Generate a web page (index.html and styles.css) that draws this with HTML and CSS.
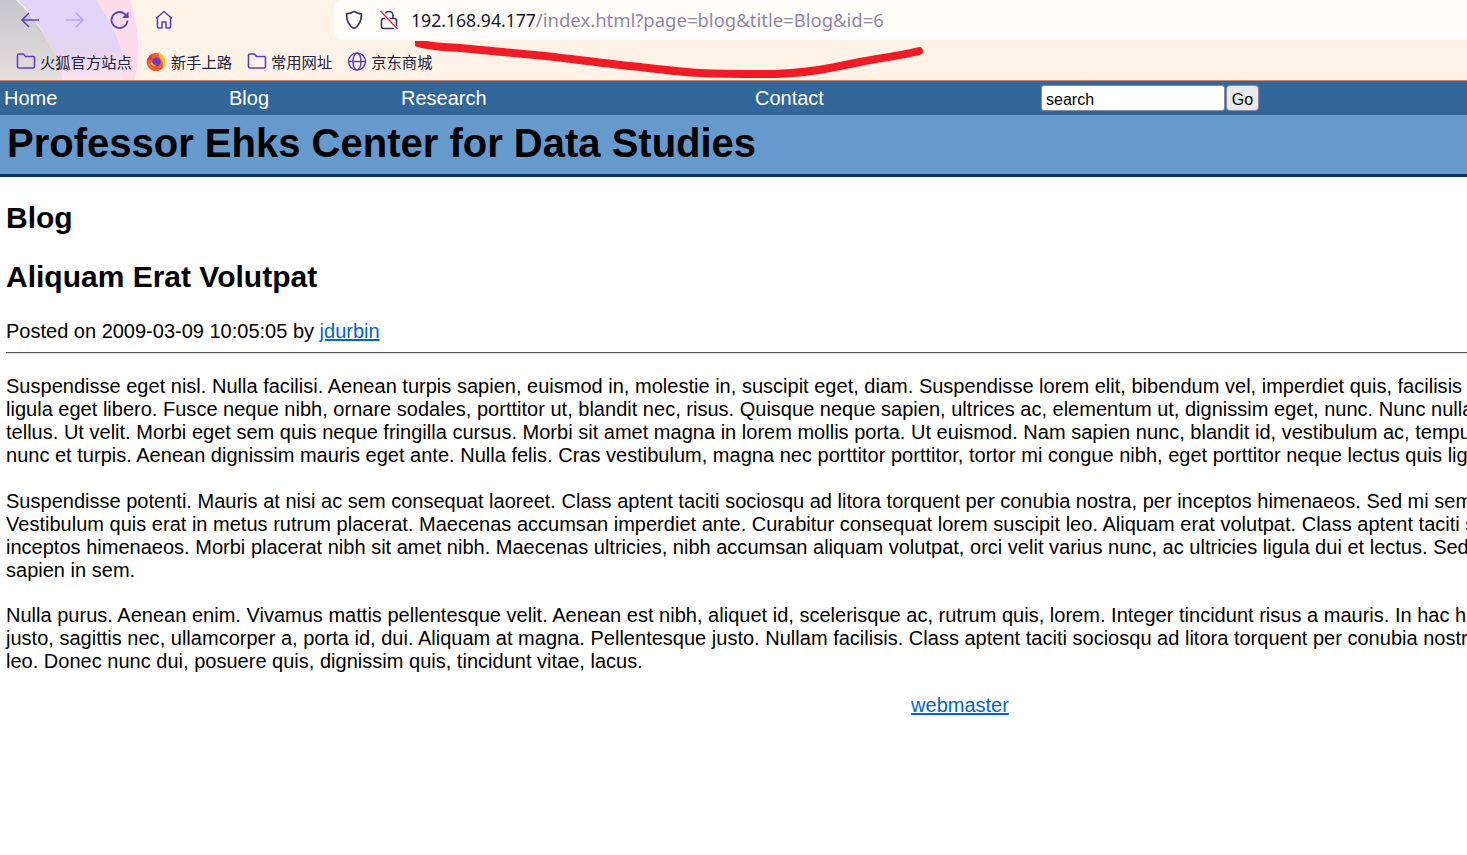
FILE: index.html
```html
<!DOCTYPE html>
<html lang="en">
<head>
<meta charset="utf-8">
<title>Professor Ehks Center for Data Studies</title>
<link rel="stylesheet" href="styles.css">
</head>
<body>
<div class="chrome">
  <svg class="theme" width="240" height="80" viewBox="0 0 240 80">
    <defs>
      <linearGradient id="grey" x1="0" y1="0" x2="0" y2="1"><stop offset="0" stop-color="#c6c5c9"/><stop offset="1" stop-color="#e4e0e0"/></linearGradient>
      <linearGradient id="lilac" x1="0" y1="0" x2="0" y2="1"><stop offset="0" stop-color="#e0d4fa"/><stop offset="0.6" stop-color="#e4d4f4"/><stop offset="1" stop-color="#fbe2ee"/></linearGradient>
    </defs>
    <path d="M96 0H130C138 28 142 55 134 80H60V0Z" fill="#fddcea"/>
    <path d="M18 0H96C112 25 128 50 122 80H62C62 62 40 22 18 0Z" fill="url(#lilac)"/>
    <path d="M0 0H16C40 22 62 62 62 80H0Z" fill="url(#grey)"/>
  </svg>
  <div class="toolbar">
    <svg class="tool" width="22" height="22" viewBox="0 0 22 22"><path d="M20 11H3M10 4l-7 7 7 7" fill="none" stroke="#5a40c8" stroke-width="1.6"/></svg>
    <svg class="tool" width="22" height="22" viewBox="0 0 22 22"><path d="M2 11h17M12 4l7 7-7 7" fill="none" stroke="#b3a6e8" stroke-width="1.6"/></svg>
    <svg class="tool" width="22" height="22" viewBox="0 0 22 22"><path d="M18.5 11.500a8 8 0 1 1-2.600-6.400L19 8" fill="none" stroke="#5a40c8" stroke-width="1.800"/><path d="M19.500 2.500v6.500h-6.500z" fill="#5a40c8"/></svg>
    <svg class="tool home" width="22" height="22" viewBox="0 0 22 22"><path d="M3 9.500 11 2.500l8 7M4.500 8.500V18a1 1 0 0 0 1 1h3.500v-6h4v6h3.500a1 1 0 0 0 1-1V8.500" fill="none" stroke="#5a40c8" stroke-width="1.600" stroke-linejoin="round"/></svg>
    <div class="urlbar">
      <svg width="20" height="22" viewBox="0 0 20 22"><path d="M10 2.500c2.500 1.500 5 2.200 7.500 2.300 0 6.500-1.500 11.700-7.500 14.700C4 16.500 2.500 11.300 2.500 4.800 5 4.700 7.500 4 10 2.500Z" fill="none" stroke="#3b3950" stroke-width="1.700" stroke-linejoin="round"/></svg>
      <svg width="20" height="22" viewBox="0 0 20 22"><rect x="2.500" y="9.500" width="15" height="10" rx="2" fill="none" stroke="#3b3950" stroke-width="1.600"/><path d="M6 9.500V6.500a4 4 0 0 1 8 0v3" fill="none" stroke="#3b3950" stroke-width="1.600"/><path d="M2 2l16 18" stroke="#fff" stroke-width="3.500"/><path d="M1.500 2l17 18" stroke="#e22850" stroke-width="1.500"/></svg>
      <span class="address"><span class="host">192.168.94.177</span>/index.html?page=blog&amp;title=Blog&amp;id=6</span>
    </div>
  </div>
  <div class="bookmarks">
    <span class="bookmark"><svg width="20" height="18" viewBox="0 0 20 18"><path d="M1.500 3.500a1.500 1.500 0 0 1 1.500-1.500h4.500l2 2.500h7.500a1.500 1.500 0 0 1 1.500 1.500v8.500a1.500 1.500 0 0 1-1.500 1.500H3a1.500 1.500 0 0 1-1.500-1.500Z" fill="none" stroke="#5a40c8" stroke-width="1.600"/></svg>火狐官方站点</span>
    <span class="bookmark"><svg class="fox" width="20" height="20" viewBox="0 0 20 20"><circle cx="10" cy="11" r="9.300" fill="#f2602c"/><path d="M12.500 0.800c2.500 2 6.800 5.500 6.800 10.200 0 2.500-1 4.500-2.500 6 1-5-1-9.500-4.500-11.500 1-1.500 1-3 .2-4.700z" fill="#fcc02e"/><circle cx="10.300" cy="11" r="4.400" fill="#6a3cc4"/><path d="M5.900 10.500c.5 2 2 3.300 4.400 3.500-2 1.500-5 1-6-1.500z" fill="#fbb52c"/><path d="M1 10c1-3.500 3-6 5.500-7-1 2-1 3-.3 4.500C6 9.500 3 9 1 10z" fill="#e8304f"/></svg>新手上路</span>
    <span class="bookmark"><svg width="20" height="18" viewBox="0 0 20 18"><path d="M1.500 3.500a1.500 1.500 0 0 1 1.500-1.500h4.500l2 2.500h7.500a1.500 1.500 0 0 1 1.500 1.500v8.500a1.500 1.500 0 0 1-1.500 1.500H3a1.500 1.500 0 0 1-1.500-1.500Z" fill="none" stroke="#5a40c8" stroke-width="1.600"/></svg>常用网址</span>
    <span class="bookmark"><svg width="20" height="20" viewBox="0 0 20 20"><g fill="none" stroke="#5a40c8" stroke-width="1.500"><circle cx="10" cy="10.500" r="8.500"/><ellipse cx="10" cy="10.500" rx="4" ry="8.500"/><path d="M1.500 10.500h17"/></g></svg>京东商城</span>
  </div>
</div>
<svg class="scribble" width="520" height="40" viewBox="0 0 520 40"><path d="M3 2C15 6 30 6 45 7 75 10 100 12 130 15 165 19 195 23 225 26 250 29 265 31 285 32 310 33 335 33 360 33 385 32 400 30 415 27 425 25 435 23 445 21 465 17 490 14 504 10" fill="none" stroke="#ef1c28" stroke-width="8" stroke-linecap="round"/></svg>
<div class="page">
  <nav class="nav">
    <a href="#">Home</a>
    <a href="#">Blog</a>
    <a href="#">Research</a>
    <a href="#">Contact</a>
    <form class="search"><input class="search-input" value="search"><button class="go" type="button">Go</button></form>
  </nav>
  <header class="banner"><h1>Professor Ehks Center for Data Studies</h1></header>
  <main class="content">
    <h2>Blog</h2>
    <h3>Aliquam Erat Volutpat</h3>
    <p class="meta">Posted on 2009-03-09 10:05:05 by <a href="#">jdurbin</a></p>
    <hr>
    <p class="body">Suspendisse eget nisl. Nulla facilisi. Aenean turpis sapien, euismod in, molestie in, suscipit eget, diam. Suspendisse lorem elit, bibendum vel, imperdiet quis, facilisis vitae, diam. Donec<br>ligula eget libero. Fusce neque nibh, ornare sodales, porttitor ut, blandit nec, risus. Quisque neque sapien, ultrices ac, elementum ut, dignissim eget, nunc. Nunc nulla nunc, ultrices at, tempor<br>tellus. Ut velit. Morbi eget sem quis neque fringilla cursus. Morbi sit amet magna in lorem mollis porta. Ut euismod. Nam sapien nunc, blandit id, vestibulum ac, tempus a, tellus. Aenean<br>nunc et turpis. Aenean dignissim mauris eget ante. Nulla felis. Cras vestibulum, magna nec porttitor porttitor, tortor mi congue nibh, eget porttitor neque lectus quis ligula.</p>
    <p class="body">Suspendisse potenti. Mauris at nisi ac sem consequat laoreet. Class aptent taciti sociosqu ad litora torquent per conubia nostra, per inceptos himenaeos. Sed mi sem, mattis et.<br>Vestibulum quis erat in metus rutrum placerat. Maecenas accumsan imperdiet ante. Curabitur consequat lorem suscipit leo. Aliquam erat volutpat. Class aptent taciti sociosqu ad litora per<br>inceptos himenaeos. Morbi placerat nibh sit amet nibh. Maecenas ultricies, nibh accumsan aliquam volutpat, orci velit varius nunc, ac ultricies ligula dui et lectus. Sed vitae<br>sapien in sem.</p>
    <p class="body">Nulla purus. Aenean enim. Vivamus mattis pellentesque velit. Aenean est nibh, aliquet id, scelerisque ac, rutrum quis, lorem. Integer tincidunt risus a mauris. In hac habitasse platea<br>justo, sagittis nec, ullamcorper a, porta id, dui. Aliquam at magna. Pellentesque justo. Nullam facilisis. Class aptent taciti sociosqu ad litora torquent per conubia nostra. Nunc vitae<br>leo. Donec nunc dui, posuere quis, dignissim quis, tincidunt vitae, lacus.</p>
  </main>
  <footer class="footer"><a href="#">webmaster</a></footer>
</div>
</body>
</html>
```
FILE: styles.css
```css
html, body {
  margin: 0;
  padding: 0;
  width: 1467px;
  height: 855px;
  overflow: hidden;
  background: #fff;
  font-family: "Liberation Sans", Arial, sans-serif;
  color: #000;
}
.chrome {
  position: relative;
  height: 80px;
  background: #fff2e7;
  border-bottom: 1px solid #c98a72;
  overflow: hidden;
}
.theme {
  position: absolute;
  left: 0;
  top: 0;
}
.toolbar {
  position: relative;
  display: flex;
  align-items: center;
  height: 40px;
  padding-left: 19px;
}
.tool {
  flex: none;
  margin-right: 23px;
}
.home {
  margin-left: -1px;
}
.urlbar {
  display: flex;
  align-items: center;
  flex: 1;
  height: 40px;
  margin-left: 136px;
  padding-left: 10px;
  gap: 15px;
  background: #fffcf9;
  border-radius: 8px 0 0 8px;
}
.address {
  margin: -2px 0 0 -3px;
  font-family: "Noto Sans", sans-serif;
  font-size: 18.5px;
  color: #8d8aa6;
  white-space: nowrap;
}
.host {
  font-size: 17.6px;
  color: #17162b;
}
.bookmarks {
  position: relative;
  display: flex;
  align-items: center;
  gap: 15px;
  height: 40px;
  padding: 1px 0 0 16px;
  box-sizing: border-box;
}
.bookmark {
  display: flex;
  align-items: center;
  gap: 4px;
  font-family: "Noto Sans CJK SC", sans-serif;
  font-size: 15.3px;
  color: #20203a;
  white-space: nowrap;
}
.fox {
  margin-left: -1px;
  margin-right: 1px;
}
.scribble {
  position: absolute;
  left: 415px;
  top: 41px;
}
.page {
  width: 1920px;
}
.nav {
  display: grid;
  grid-template-columns: 225px 172px 354px 286px 1fr;
  align-items: center;
  height: 34px;
  padding-left: 4px;
  background: #336699;
}
.nav a {
  color: #fff;
  font-size: 20px;
  text-decoration: none;
}
.search {
  display: flex;
  align-items: center;
  gap: 1.5px;
  margin: 0;
}
.search-input {
  box-sizing: border-box;
  width: 183.5px;
  height: 26px;
  padding: 3px 4px 0;
  border: 1px solid #8a8aa0;
  border-radius: 3px;
  background: #fff;
  font-family: "Liberation Sans", Arial, sans-serif;
  font-size: 16px;
  color: #000;
}
.go {
  box-sizing: border-box;
  width: 33px;
  height: 26px;
  padding: 3px 0 0;
  border: 1px solid #8a8aa0;
  border-radius: 4px;
  background: #e9e9ed;
  font-family: "Liberation Sans", Arial, sans-serif;
  font-size: 16px;
  color: #000;
}
.banner {
  box-sizing: border-box;
  height: 62px;
  padding: 5px 0 0 7px;
  background: #6699cc;
  border-bottom: 3px solid #0f3068;
}
h1 {
  margin: 0;
  font-size: 40px;
  line-height: 46px;
}
.content {
  padding: 0 6px;
}
h2 {
  margin: 24px 0 0;
  font-size: 30px;
  line-height: 34px;
}
h3 {
  margin: 25px 0 0;
  font-size: 30px;
  line-height: 34px;
}
.meta {
  margin: 26px 0 0;
  font-size: 20px;
  line-height: 23px;
}
a {
  color: #0066cc;
}
hr {
  margin: 9px 0 0;
  height: 0;
  border: 0;
  border-top: 1px solid #555;
  border-bottom: 1px solid #ddd;
}
.body {
  margin: 23px 0 0;
  font-size: 20px;
  line-height: 23px;
  letter-spacing: 0.012px;
  white-space: nowrap;
}
hr + .body {
  margin-top: 21px;
}
.body + .body + .body {
  margin-top: 22px;
}
.footer {
  margin-top: 21px;
  text-align: center;
  font-size: 20px;
  line-height: 23px;
}
```
